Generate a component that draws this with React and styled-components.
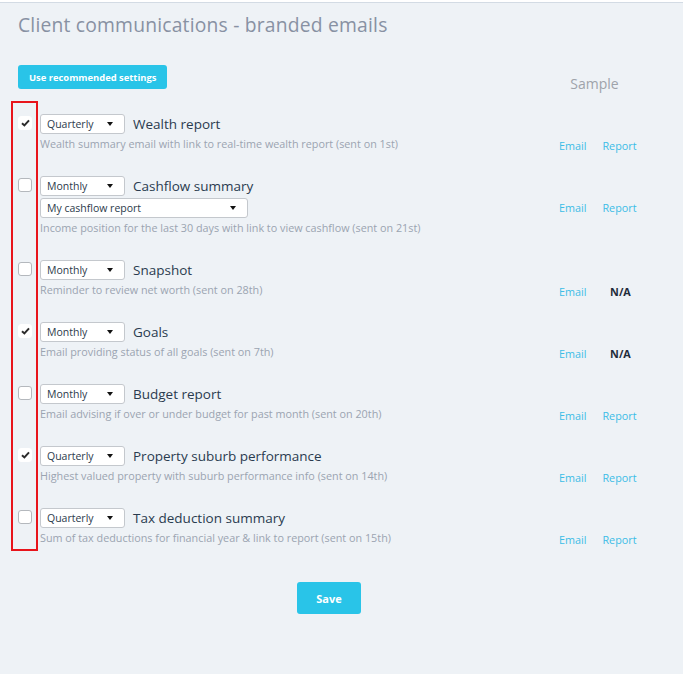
import React, { useState } from "react";
import styled, { createGlobalStyle } from "styled-components";

const GlobalStyle = createGlobalStyle`
  html, body {
    margin: 0;
    padding: 0;
    background: #ffffff;
  }
  body {
    font-family: "Open Sans", "Noto Sans", sans-serif;
  }
`;

const emails = [
  {
    id: "wealth",
    checked: true,
    frequency: "Quarterly",
    title: "Wealth report",
    description:
      "Wealth summary email with link to real-time wealth report (sent on 1st)",
    report: true,
  },
  {
    id: "cashflow",
    checked: false,
    frequency: "Monthly",
    title: "Cashflow summary",
    extraSelect: "My cashflow report",
    description:
      "Income position for the last 30 days with link to view cashflow (sent on 21st)",
    report: true,
  },
  {
    id: "snapshot",
    checked: false,
    frequency: "Monthly",
    title: "Snapshot",
    description: "Reminder to review net worth (sent on 28th)",
    report: false,
  },
  {
    id: "goals",
    checked: true,
    frequency: "Monthly",
    title: "Goals",
    description: "Email providing status of all goals (sent on 7th)",
    report: false,
  },
  {
    id: "budget",
    checked: false,
    frequency: "Monthly",
    title: "Budget report",
    description:
      "Email advising if over or under budget for past month (sent on 20th)",
    report: true,
  },
  {
    id: "property",
    checked: true,
    frequency: "Quarterly",
    title: "Property suburb performance",
    description:
      "Highest valued property with suburb performance info (sent on 14th)",
    report: true,
  },
  {
    id: "tax",
    checked: false,
    frequency: "Quarterly",
    title: "Tax deduction summary",
    description:
      "Sum of tax deductions for financial year & link to report (sent on 15th)",
    report: true,
  },
];

const Checkbox = ({ checked, onClick }) => (
  <CheckBox $checked={checked} onClick={onClick}>
    {checked && (
      <svg width="9" height="8" viewBox="0 0 9 8">
        <path
          d="M1 4.2 L3.4 6.4 L8 1.4"
          fill="none"
          stroke="#2b2b2b"
          strokeWidth="2"
        />
      </svg>
    )}
  </CheckBox>
);

const Dropdown = ({ value, wide }) => (
  <SelectBox $wide={wide}>
    <span>{value}</span>
    <Arrow />
  </SelectBox>
);

const App = () => {
  const [items, setItems] = useState(emails);

  const toggle = (id) =>
    setItems(items.map((i) => (i.id === id ? { ...i, checked: !i.checked } : i)));

  return (
    <Page>
      <GlobalStyle />
      <Title>Client communications - branded emails</Title>

      <Header>
        <PrimaryButton>Use recommended settings</PrimaryButton>
        <SampleLabel>Sample</SampleLabel>
      </Header>

      <List>
        {/* highlight drawn around the checkbox column */}
        <Highlight />
        {items.map((item) => (
          <Row key={item.id}>
            <Checkbox checked={item.checked} onClick={() => toggle(item.id)} />
            <Content>
              <TopLine>
                <Dropdown value={item.frequency} />
                <RowTitle>{item.title}</RowTitle>
              </TopLine>
              {item.extraSelect && <Dropdown value={item.extraSelect} wide />}
              <Description>{item.description}</Description>
            </Content>
            <Links>
              <LinkText>Email</LinkText>
              {item.report ? <LinkText>Report</LinkText> : <NA>N/A</NA>}
            </Links>
          </Row>
        ))}
      </List>

      <Footer>
        <SaveButton>Save</SaveButton>
      </Footer>
    </Page>
  );
};

const Page = styled.div`
  margin-top: 2px;
  border-top: 1px solid #d3dbe4;
  background: #eef2f6;
  min-height: 672px;
  box-sizing: border-box;
  padding: 10px 0 0 18px;
  width: 683px;
`;

const Title = styled.h1`
  margin: 0;
  font-size: 19.3px;
  line-height: 24px;
  font-weight: 400;
  color: #8891a3;
  letter-spacing: 0.2px;
`;

const Header = styled.div`
  display: flex;
  align-items: flex-end;
  justify-content: space-between;
  width: 622px;
  margin-top: 28px;
`;

const PrimaryButton = styled.button`
  height: 24px;
  padding: 0 11px;
  border: none;
  border-radius: 3px;
  background: #29c4e8;
  color: #ffffff;
  font-family: inherit;
  font-size: 9.4px;
  font-weight: 700;
  cursor: pointer;
`;

const SampleLabel = styled.div`
  width: 81px;
  padding-right: 10px;
  box-sizing: border-box;
  text-align: center;
  font-size: 14px;
  line-height: 18px;
  margin-bottom: -4px;
  color: #9ea3aa;
`;

const List = styled.div`
  position: relative;
  width: 622px;
  padding-top: 25px;
`;

const Highlight = styled.div`
  position: absolute;
  left: -7px;
  top: 12px;
  width: 27px;
  height: 450px;
  box-sizing: border-box;
  border: 2px solid #e8141b;
  pointer-events: none;
`;

const Row = styled.div`
  display: flex;
  align-items: flex-start;
  margin-bottom: 25px;

  &:last-of-type {
    margin-bottom: 0;
  }
`;

const CheckBox = styled.div`
  width: 14px;
  height: 14px;
  margin-top: 2px;
  margin-right: 8px;
  box-sizing: border-box;
  border-radius: 3px;
  background: #ffffff;
  border: 1px solid ${(p) => (p.$checked ? "#ffffff" : "#b4b8bd")};
  display: flex;
  align-items: center;
  justify-content: center;
  cursor: pointer;
  flex-shrink: 0;
`;

const Content = styled.div`
  flex: 1;
  display: flex;
  flex-direction: column;
  align-items: flex-start;
  gap: 2px;
`;

const TopLine = styled.div`
  display: flex;
  align-items: center;
  gap: 8px;
  height: 20px;
`;

const SelectBox = styled.div`
  width: ${(p) => (p.$wide ? "208px" : "85px")};
  height: 20px;
  box-sizing: border-box;
  border: 1px solid #c4c8cd;
  border-radius: 3px;
  background: #ffffff;
  display: flex;
  align-items: center;
  justify-content: space-between;
  padding: 0 11px 0 6px;
  font-size: 10.5px;
  color: #2b3a4b;
`;

const Arrow = styled.span`
  width: 0;
  height: 0;
  border-left: 3px solid transparent;
  border-right: 3px solid transparent;
  border-top: 4px solid #111111;
`;

const RowTitle = styled.span`
  font-size: 13.5px;
  color: #2a3b4f;
`;

const Description = styled.div`
  margin-top: 1px;
  font-size: 10.8px;
  line-height: 14px;
  color: #9ba4b1;
  white-space: nowrap;
`;

const Links = styled.div`
  width: 81px;
  height: 37px;
  box-sizing: border-box;
  display: flex;
  gap: 16px;
  padding-top: 25px;
  font-size: 10.8px;
  line-height: 14px;
`;

const LinkText = styled.a`
  color: #3cbde6;
  cursor: pointer;
`;

const NA = styled.span`
  width: 36px;
  text-align: center;
  font-weight: 700;
  color: #1f2c3b;
`;

const Footer = styled.div`
  width: 622px;
  display: flex;
  justify-content: center;
  margin-top: 37px;
`;

const SaveButton = styled.button`
  width: 64px;
  height: 32px;
  border: none;
  border-radius: 3px;
  background: #29c4e8;
  color: #ffffff;
  font-family: inherit;
  font-size: 11px;
  font-weight: 700;
  cursor: pointer;
`;

export default App;
